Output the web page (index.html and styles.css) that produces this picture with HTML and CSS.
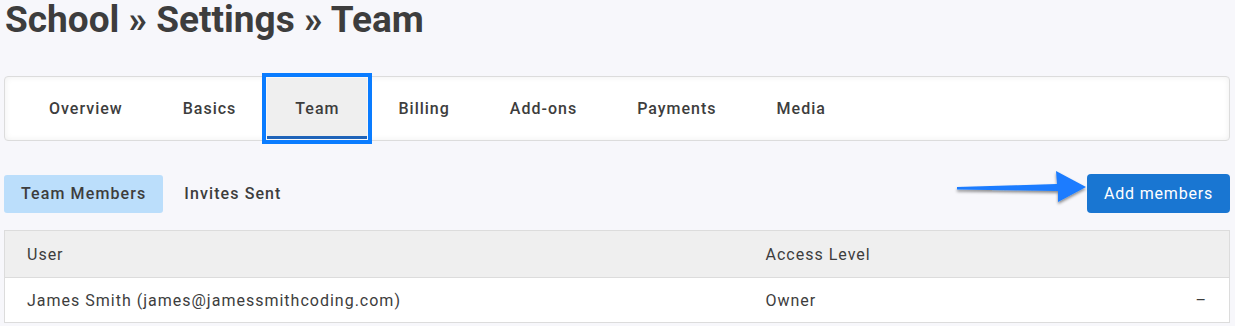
FILE: index.html
```html
<!DOCTYPE html>
<html lang="en">
  <head>
    <meta charset="UTF-8" />
    <meta name="viewport" content="width=device-width, initial-scale=1.0" />
    <title>School » Settings » Team</title>
    <link rel="stylesheet" href="styles.css">
  </head>
  <body>
    <h1 class="page-title">School » Settings » Team</h1>

    <nav class="tabs">
      <a class="tab">Overview</a>
      <a class="tab">Basics</a>
      <a class="tab active">Team</a>
      <a class="tab">Billing</a>
      <a class="tab">Add-ons</a>
      <a class="tab">Payments</a>
      <a class="tab">Media</a>
    </nav>

    <div class="toolbar">
      <div class="subtabs">
        <button class="subtab selected">Team Members</button>
        <button class="subtab">Invites Sent</button>
      </div>
      <svg class="arrow" width="138" height="38" viewBox="0 0 138 38">
        <defs>
          <filter id="arrowShadow" x="-10%" y="-30%" width="120%" height="180%">
            <feDropShadow dx="0" dy="2" stdDeviation="1.5" flood-color="#000" flood-opacity="0.45" />
          </filter>
        </defs>
        <path d="M5 18 L105 15 L104 2 L134 18 L106 33 L106 22 L5 20.5 Z" fill="#1a7cff" filter="url(#arrowShadow)" />
      </svg>
      <button class="add-button">Add members</button>
    </div>

    <table class="team-table">
      <thead>
        <tr>
          <th class="col-user">User</th>
          <th class="col-access">Access Level</th>
          <th class="col-action"></th>
        </tr>
      </thead>
      <tbody>
        <tr>
          <td>James Smith (james@jamessmithcoding.com)</td>
          <td>Owner</td>
          <td class="col-action">–</td>
        </tr>
      </tbody>
    </table>
  </body>
</html>
```

FILE: styles.css
```css
* {
  margin: 0;
  padding: 0;
  box-sizing: border-box;
}
body {
  font-family: Roboto, "Liberation Sans", sans-serif;
  background-color: #f7f7fb;
  color: #3d3d3d;
  padding: 0 5px 0 4px;
}
.page-title {
  font-size: 37px;
  line-height: 40px;
  font-weight: 700;
  color: #3d3d3d;
  padding-left: 1px;
}
.tabs {
  display: flex;
  margin-top: 36px;
  height: 65px;
  padding: 0 14px;
  background: #fff;
  border: 1px solid #dcdcdc;
  border-radius: 4px;
  box-shadow: inset 0 0 6px rgba(0, 0, 0, 0.07);
}
.tab {
  display: flex;
  align-items: center;
  padding: 0 30px;
  font-size: 16px;
  font-weight: 500;
  letter-spacing: 1px;
  color: #3d3d3d;
}
.tab.active {
  background: #efefef;
  border: 1px solid #f8f8f8;
  box-shadow: inset 0 -3px 0 #1e63b9;
  outline: 4px solid #0a7cff;
  outline-offset: 0;
  padding: 0 28px;
}
.toolbar {
  position: relative;
  display: flex;
  align-items: center;
  justify-content: space-between;
  margin-top: 33px;
  height: 39px;
}
.subtabs {
  display: flex;
  gap: 4px;
}
.subtab {
  height: 38px;
  padding: 0 17px;
  border: none;
  border-radius: 3px;
  background: transparent;
  font-family: inherit;
  font-size: 16px;
  font-weight: 500;
  letter-spacing: 1.1px;
  color: #3d3d3d;
}
.subtab.selected {
  background: #bbdefb;
}
.arrow {
  position: absolute;
  left: 948px;
  top: -5px;
}
.add-button {
  height: 39px;
  padding: 0 17px;
  border: none;
  border-radius: 4px;
  background: #1976d2;
  color: #fff;
  font-family: inherit;
  font-size: 16px;
  font-weight: 400;
  letter-spacing: 0.8px;
}
.team-table {
  width: 100%;
  margin-top: 17px;
  border-collapse: collapse;
  background: #fff;
  font-size: 16px;
  letter-spacing: 1px;
  color: #3d3d3d;
}
.team-table th,
.team-table td {
  text-align: left;
  font-weight: 400;
  padding: 0 22px;
  border-top: 1px solid #dcdcdc;
  border-bottom: 1px solid #dcdcdc;
}
.team-table th:first-child,
.team-table td:first-child {
  border-left: 1px solid #dcdcdc;
}
.team-table th:last-child,
.team-table td:last-child {
  border-right: 1px solid #dcdcdc;
}
.team-table thead tr {
  background: #efefef;
  height: 47px;
}
.team-table tbody tr {
  height: 45px;
}
.col-user {
  width: 739px;
}
.col-action {
  width: 60px;
  text-align: right !important;
  padding-right: 22px !important;
}
```
